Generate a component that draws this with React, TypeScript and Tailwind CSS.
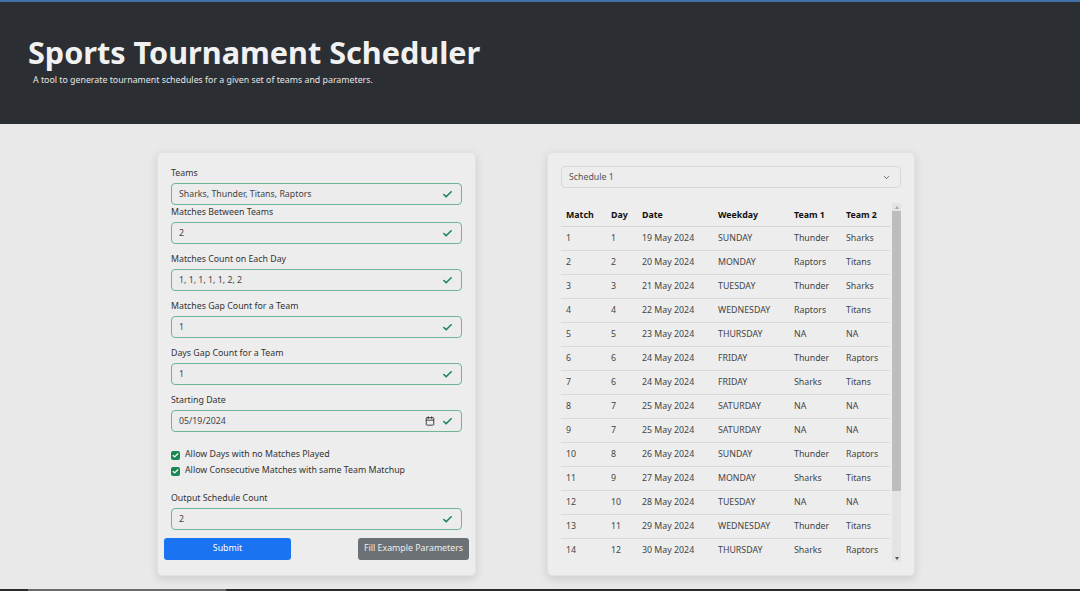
import { Check, ChevronDown, Calendar } from 'lucide-react';

const fields = [
  { label: 'Teams', value: 'Sharks, Thunder, Titans, Raptors' },
  { label: 'Matches Between Teams', value: '2' },
  { label: 'Matches Count on Each Day', value: '1, 1, 1, 1, 1, 2, 2' },
  { label: 'Matches Gap Count for a Team', value: '1' },
  { label: 'Days Gap Count for a Team', value: '1' },
];

const rows = [
  [1, 1, '19 May 2024', 'SUNDAY', 'Thunder', 'Sharks'],
  [2, 2, '20 May 2024', 'MONDAY', 'Raptors', 'Titans'],
  [3, 3, '21 May 2024', 'TUESDAY', 'Thunder', 'Sharks'],
  [4, 4, '22 May 2024', 'WEDNESDAY', 'Raptors', 'Titans'],
  [5, 5, '23 May 2024', 'THURSDAY', 'NA', 'NA'],
  [6, 6, '24 May 2024', 'FRIDAY', 'Thunder', 'Raptors'],
  [7, 6, '24 May 2024', 'FRIDAY', 'Sharks', 'Titans'],
  [8, 7, '25 May 2024', 'SATURDAY', 'NA', 'NA'],
  [9, 7, '25 May 2024', 'SATURDAY', 'NA', 'NA'],
  [10, 8, '26 May 2024', 'SUNDAY', 'Thunder', 'Raptors'],
  [11, 9, '27 May 2024', 'MONDAY', 'Sharks', 'Titans'],
  [12, 10, '28 May 2024', 'TUESDAY', 'NA', 'NA'],
  [13, 11, '29 May 2024', 'WEDNESDAY', 'Thunder', 'Titans'],
  [14, 12, '30 May 2024', 'THURSDAY', 'Sharks', 'Raptors'],
];

function ValidInput({ value, date }: { value: string; date?: boolean }) {
  return (
    <div className="h-[22px] border border-[#6fb593] rounded-[4px] flex items-center pl-[7px] pr-[8px] text-[#444] bg-[#ececec]">
      <span className="flex-1 pt-[2px]">{value}</span>
      {date && <Calendar className="w-[10px] h-[10px] mr-[7px] text-[#333]" strokeWidth={2.2} />}
      <Check className="w-[11px] h-[11px] text-[#198754]" strokeWidth={3.5} />
    </div>
  );
}

function Field({ label, value, date, tight }: { label: string; value: string; date?: boolean; tight?: boolean }) {
  return (
    <div className={tight ? '' : 'mb-[8px]'}>
      <div className="h-[14px] leading-[14px] mb-[3px] text-[#333]">{label}</div>
      <ValidInput value={value} date={date} />
    </div>
  );
}

function CheckBox({ label }: { label: string }) {
  return (
    <div className="flex items-center h-[16px] gap-[5px]">
      <span className="w-[9px] h-[9px] rounded-[2px] bg-[#198754] flex items-center justify-center">
        <Check className="w-[7px] h-[7px] text-white" strokeWidth={4} />
      </span>
      <span className="text-[#333]">{label}</span>
    </div>
  );
}

export default function App() {
  return (
    <div className="h-[591px] w-[1080px] flex flex-col bg-[#e9e9e9] overflow-hidden text-[8.8px] font-['Noto_Sans',sans-serif]">
      <div className="h-[2px] bg-[#3f70a8]" />
      <header className="h-[122px] bg-[#2b2f33] pl-[28px] pt-[30px]">
        <h1 className="text-[30.6px] font-bold leading-[40px] text-[#f1f1f1]">Sports Tournament Scheduler</h1>
        <p className="ml-[5px] mt-[2px] text-[8.8px] text-[#e6e6e6]">A tool to generate tournament schedules for a given set of teams and parameters.</p>
      </header>

      <main className="flex-1 flex items-start pt-[28px] pl-[157px] gap-[71px]">
        <div className="w-[319px] h-[424px] bg-[#ededed] rounded-[5px] shadow-[0_3px_10px_rgba(0,0,0,0.13)] border border-[#e2e2e2] pt-[13px] pb-[15px]">
          <div className="px-[13px]">
            <Field label={fields[0].label} value={fields[0].value} tight />
            {fields.slice(1).map((f) => (
              <Field key={f.label} label={f.label} value={f.value} />
            ))}
            <Field label="Starting Date" value="05/19/2024" date />
            <div className="mt-[15px] mb-[12px]">
              <CheckBox label="Allow Days with no Matches Played" />
              <CheckBox label="Allow Consecutive Matches with same Team Matchup" />
            </div>
            <Field label="Output Schedule Count" value="2" />
          </div>
          <div className="flex justify-between px-[6px] mt-[4px]">
            <button className="w-[127px] h-[22px] rounded-[3px] bg-[#1a73f0] text-white">Submit</button>
            <button className="w-[111px] h-[22px] rounded-[3px] bg-[#6c7175] text-[#eee] whitespace-nowrap">Fill Example Parameters</button>
          </div>
        </div>

        <div className="w-[368px] h-[424px] bg-[#ededed] rounded-[5px] shadow-[0_3px_10px_rgba(0,0,0,0.13)] border border-[#e2e2e2] p-[13px] flex flex-col">
          <div className="h-[22px] border border-[#d8d8d8] rounded-[4px] flex items-center pl-[7px] pr-[9px] text-[#555]">
            <span className="flex-1 pt-[2px]">Schedule 1</span>
            <ChevronDown className="w-[9px] h-[9px] text-[#444]" strokeWidth={2} />
          </div>
          <div className="mt-[15px] h-[359px] flex">
            <div className="w-[330px] overflow-hidden">
              <table className="w-[329px] border-collapse text-left">
                <thead>
                  <tr className="h-[23px] border-b border-[#d6d6d6] text-[#111] font-bold">
                    <th className="w-[45px] pl-[5px] pt-[2px]">Match</th>
                    <th className="w-[31px] pl-[5px] pt-[2px]">Day</th>
                    <th className="w-[76px] pl-[5px] pt-[2px]">Date</th>
                    <th className="w-[76px] pl-[5px] pt-[2px]">Weekday</th>
                    <th className="w-[52px] pl-[5px] pt-[2px]">Team 1</th>
                    <th className="pl-[5px] pt-[2px]">Team 2</th>
                  </tr>
                </thead>
                <tbody className="text-[#444]">
                  {rows.map((r) => (
                    <tr key={r[0]} className="h-[24px] border-b border-[#d9d9d9]">
                      {r.map((c, i) => (
                        <td key={i} className="pl-[5px] pt-[2px]">{c}</td>
                      ))}
                    </tr>
                  ))}
                </tbody>
              </table>
            </div>
            <div className="w-[9px] ml-[1px] bg-[#e4e4e4] flex flex-col items-center">
              <div className="h-[8px] flex items-center justify-center">
                <div className="w-0 h-0 border-l-[2.5px] border-r-[2.5px] border-b-[3px] border-l-transparent border-r-transparent border-b-[#a8a8a8]" />
              </div>
              <div className="w-full h-[280px] bg-[#bdbdbd]" />
              <div className="flex-1" />
              <div className="h-[8px] flex items-center justify-center">
                <div className="w-0 h-0 border-l-[2.5px] border-r-[2.5px] border-t-[3px] border-l-transparent border-r-transparent border-t-[#555]" />
              </div>
            </div>
          </div>
        </div>
      </main>
      <div className="h-[2px] bg-[#2a2a2a] flex">
        <div className="ml-[28px] w-[198px] bg-[#6a6a6a]" />
      </div>
    </div>
  );
}
